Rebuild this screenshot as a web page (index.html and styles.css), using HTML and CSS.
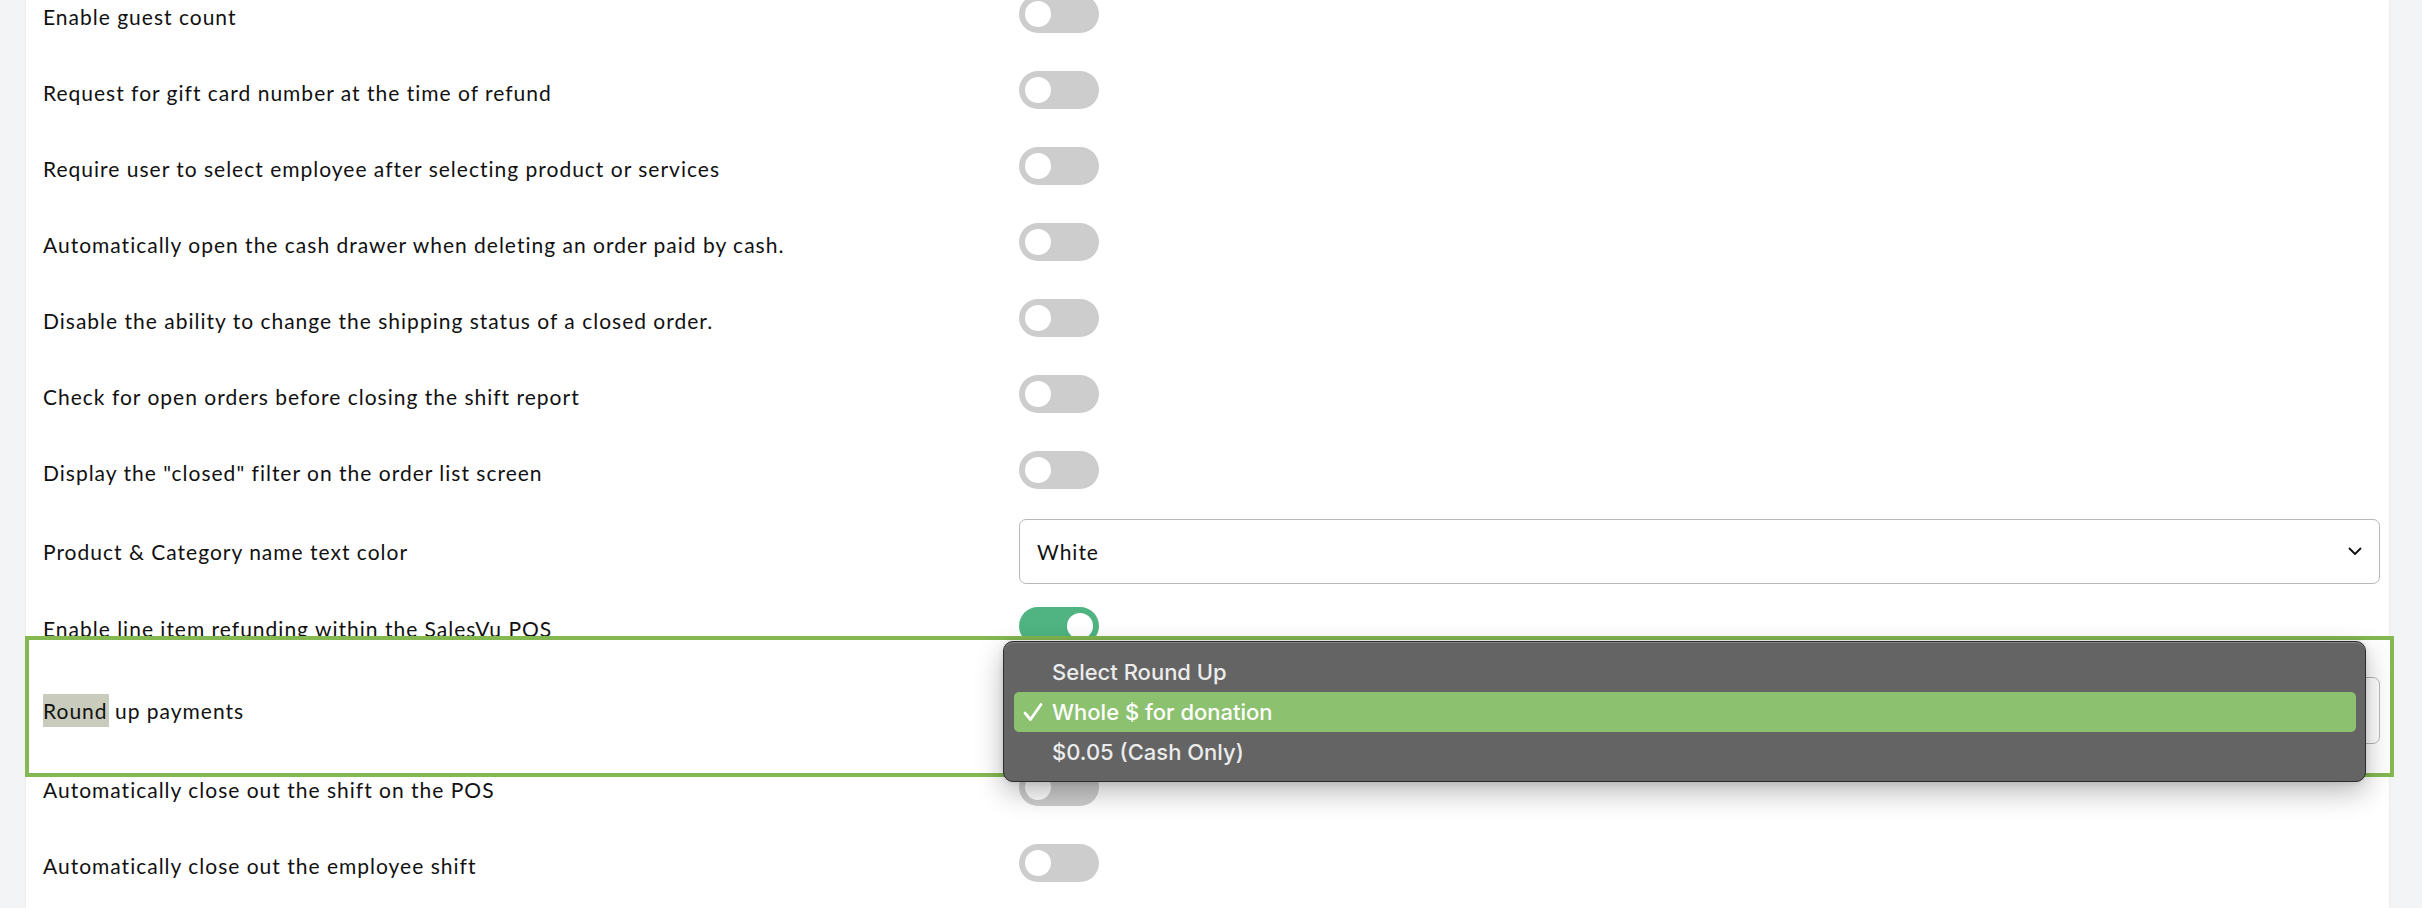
FILE: index.html
```html
<!DOCTYPE html>
<html lang="en">
<head>
<meta charset="utf-8">
<title>Settings</title>
<link rel="stylesheet" href="styles.css">
</head>
<body>
<div class="page">
  <div class="card">
    <div class="list">
      <div class="row row--toggle"><div class="label">Enable guest count</div><div class="control"><span class="toggle"></span></div></div>
      <div class="row row--toggle"><div class="label">Request for gift card number at the time of refund</div><div class="control"><span class="toggle"></span></div></div>
      <div class="row row--toggle"><div class="label">Require user to select employee after selecting product or services</div><div class="control"><span class="toggle"></span></div></div>
      <div class="row row--toggle"><div class="label">Automatically open the cash drawer when deleting an order paid by cash.</div><div class="control"><span class="toggle"></span></div></div>
      <div class="row row--toggle"><div class="label">Disable the ability to change the shipping status of a closed order.</div><div class="control"><span class="toggle"></span></div></div>
      <div class="row row--toggle"><div class="label">Check for open orders before closing the shift report</div><div class="control"><span class="toggle"></span></div></div>
      <div class="row row--toggle"><div class="label">Display the "closed" filter on the order list screen</div><div class="control"><span class="toggle"></span></div></div>
      <div class="row row--select"><div class="label">Product &amp; Category name text color</div>
        <div class="control">
          <div class="select"><span class="select-value">White</span>
            <svg class="chevron" width="14" height="9" viewBox="0 0 14 9"><polyline points="1.5,1.5 7,7 12.5,1.5" fill="none" stroke="#111" stroke-width="1.8" stroke-linecap="round" stroke-linejoin="round"/></svg>
          </div>
        </div>
      </div>
      <div class="row row--toggle"><div class="label">Enable line item refunding within the SalesVu POS</div><div class="control"><span class="toggle toggle--on"></span></div></div>
      <div class="row row--focus"><div class="label"><span class="mark">Round</span> up payments</div>
        <div class="control">
          <div class="select select--tall"><span class="select-value select-value--hidden">Whole $ for donation</span>
            <svg class="chevron" width="14" height="9" viewBox="0 0 14 9"><polyline points="1.5,1.5 7,7 12.5,1.5" fill="none" stroke="#111" stroke-width="1.8" stroke-linecap="round" stroke-linejoin="round"/></svg>
            <div class="menu">
              <div class="menu-item">Select Round Up</div>
              <div class="menu-item menu-item--active">
                <svg class="check" width="22" height="22" viewBox="0 0 22 22"><polyline points="3,12 8.5,18.5 19,3.5" fill="none" stroke="#fff" stroke-width="2.8" stroke-linecap="round" stroke-linejoin="round"/></svg>
                Whole $ for donation</div>
              <div class="menu-item">$0.05 (Cash Only)</div>
            </div>
          </div>
        </div>
      </div>
      <div class="row row--toggle"><div class="label">Automatically close out the shift on the POS</div><div class="control"><span class="toggle"></span></div></div>
      <div class="row row--toggle"><div class="label">Automatically close out the employee shift</div><div class="control"><span class="toggle"></span></div></div>
    </div>
  </div>
</div>
</body>
</html>
```
FILE: styles.css
```css
* { box-sizing: border-box; }
html, body { margin: 0; padding: 0; }
body {
  background: #f3f4f6;
  font-family: "Lato", "Liberation Sans", sans-serif;
  color: #111;
  height: 908px;
  overflow: hidden;
}
.page { height: 908px; overflow: hidden; }
.card {
  display: flow-root;
  margin-left: 26px;
  width: 2363px;
  height: 908px;
  background: #fff;
  padding: 0 9px 0 17px;
  box-shadow: 0 0 3px rgba(0,0,0,0.06);
}
.list { margin-top: -24px; }
.row {
  display: grid;
  grid-template-columns: 976px 1fr;
  align-items: center;
  padding: 19px 0;
}
.label {
  font-size: 21px;
  line-height: 28px;
  letter-spacing: 1px;
  color: #111;
}
.row--toggle .label { padding-top: 6px; }
.control { display: flex; align-items: center; }
.toggle {
  display: block;
  width: 80px;
  height: 38px;
  border-radius: 19px;
  background: #cdcdcd;
  position: relative;
}
.toggle::after {
  content: "";
  position: absolute;
  left: 6px;
  top: 6px;
  width: 26px;
  height: 26px;
  border-radius: 50%;
  background: #fff;
}
.toggle--on { background: #4fb382; }
.toggle--on::after { left: auto; right: 6px; }

.row--select { padding: 11px 0 4px; }
.select {
  position: relative;
  width: 100%;
  height: 65px;
  border: 1px solid #b8b8b8;
  border-radius: 7px;
  background: #fff;
  display: flex;
  align-items: center;
  justify-content: space-between;
  padding: 0 17px 0 17px;
  font-size: 21px;
  letter-spacing: 1px;
}
.select--tall { height: 67px; }
.select-value--hidden { visibility: hidden; }
.chevron { display: block; }

.row--focus {
  position: relative;
  z-index: 2;
  background: #fff;
  border: 4px solid #84b851;
  margin: -28px -14px -28px -18px;
  padding: 37px 10px 29px 14px;
}
.mark {
  background: #c9ccbd;
  padding: 4px 1px 4px 0;
}
.menu {
  position: absolute;
  left: -17px;
  top: -37px;
  width: 1363px;
  height: 141px;
  background: #636463;
  border: 1px solid #2c2c2c;
  border-radius: 10px;
  box-shadow: inset 0 1px 0 rgba(255,255,255,0.22), 0 10px 28px rgba(0,0,0,0.28), 0 0 6px rgba(0,0,0,0.12);
  padding: 10px 9px 9px 10px;
  font-family: "Inter", "Roboto", sans-serif;
  font-weight: 500;
  font-size: 22px;
  letter-spacing: 0;
  color: #f2f2f2;
}
.menu-item {
  position: relative;
  height: 40px;
  line-height: 40px;
  padding-left: 38px;
  border-radius: 5px;
  color: #ececec;
}
.menu-item--active {
  background: #8cc170;
  color: #fff;
}
.check {
  position: absolute;
  left: 8px;
  top: 9px;
}
```
